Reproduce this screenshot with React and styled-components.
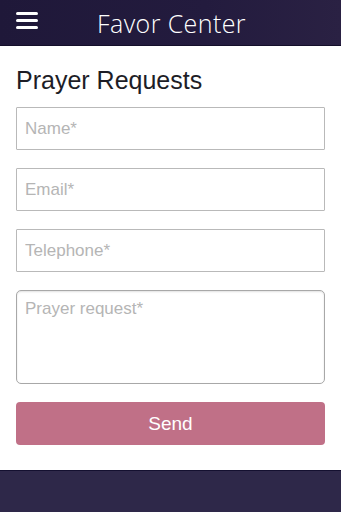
import styled, { createGlobalStyle } from "styled-components";

const GlobalStyle = createGlobalStyle`
  html, body {
    margin: 0;
    padding: 0;
    background: #ffffff;
  }
  body {
    font-family: "Liberation Sans", Arial, sans-serif;
  }
  * {
    box-sizing: border-box;
  }
`;

const Page = styled.div`
  display: flex;
  flex-direction: column;
  width: 341px;
  height: 512px;
  overflow: hidden;
`;

const Header = styled.header`
  position: relative;
  display: flex;
  align-items: center;
  justify-content: center;
  height: 46px;
  flex-shrink: 0;
  background: linear-gradient(90deg, #1f1839 0%, #231b3e 60%, #2a2143 100%);
  border-bottom: 1px solid #140f2a;
`;

const MenuButton = styled.button`
  position: absolute;
  left: 16px;
  top: 12px;
  display: flex;
  flex-direction: column;
  gap: 4px;
  width: 22px;
  padding: 0;
  border: none;
  background: none;
`;

const MenuBar = styled.span`
  display: block;
  height: 3px;
  border-radius: 2px;
  background: #ffffff;
`;

const HeaderTitle = styled.h1`
  margin: 0 0 0 2px;
  font-family: "Open Sans", "Liberation Sans", sans-serif;
  font-weight: 300;
  font-size: 25px;
  letter-spacing: 0.4px;
  color: #ffffff;
`;

const Content = styled.main`
  flex: 1;
  display: flex;
  flex-direction: column;
  padding: 20px 16px 0 16px;
`;

const PageTitle = styled.h2`
  margin: 0 0 13px 0;
  font-family: "Liberation Sans", Arial, sans-serif;
  font-weight: 400;
  font-size: 25px;
  line-height: 28px;
  color: #1d1d26;
`;

const Form = styled.form`
  display: flex;
  flex-direction: column;
  gap: 18px;
`;

const Field = styled.input`
  width: 309px;
  height: 43px;
  padding: 0 8px;
  border: 1px solid #b9b9b9;
  border-radius: 1px;
  font-family: "Liberation Sans", Arial, sans-serif;
  font-size: 17px;
  color: #333;
  background: #fff;
  &::placeholder {
    color: #b5b5b5;
  }
`;

const TextArea = styled.textarea`
  width: 309px;
  height: 94px;
  padding: 8px 8px;
  border: 1px solid #a8a8a8;
  border-radius: 5px;
  font-family: "Liberation Sans", Arial, sans-serif;
  font-size: 17px;
  resize: none;
  box-shadow: inset 0 1px 2px rgba(0, 0, 0, 0.12);
  &::placeholder {
    color: #b5b5b5;
  }
`;

const SendButton = styled.button`
  width: 309px;
  height: 43px;
  border: none;
  border-radius: 4px;
  background: #c07087;
  color: #ffffff;
  font-family: "Liberation Sans", Arial, sans-serif;
  font-size: 19px;
`;

const Footer = styled.footer`
  height: 42px;
  flex-shrink: 0;
  background: #2e2849;
  border-top: 1px solid #141030;
`;

export default function App() {
  return (
    <Page>
      <GlobalStyle />
      <Header>
        <MenuButton aria-label="Menu">
          <MenuBar />
          <MenuBar />
          <MenuBar />
        </MenuButton>
        <HeaderTitle>Favor Center</HeaderTitle>
      </Header>
      <Content>
        <PageTitle>Prayer Requests</PageTitle>
        <Form onSubmit={(e) => e.preventDefault()}>
          <Field placeholder="Name*" />
          <Field placeholder="Email*" />
          <Field placeholder="Telephone*" />
          <TextArea placeholder="Prayer request*" />
          <SendButton type="submit">Send</SendButton>
        </Form>
      </Content>
      <Footer />
    </Page>
  );
}
